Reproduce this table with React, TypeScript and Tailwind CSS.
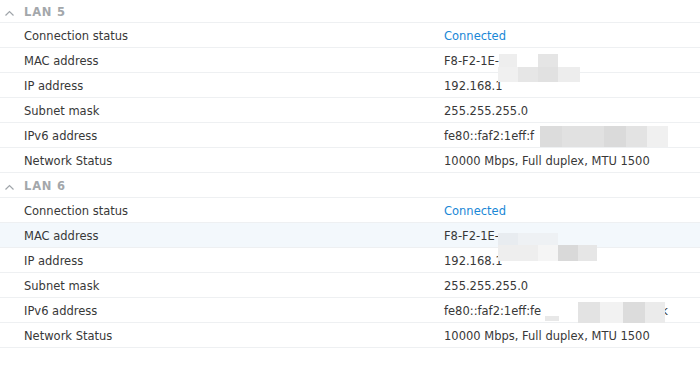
import React from "react";

type Blk = { x: number; y: number; w: number; h: number; c: string };

const rows = [
  { label: "Connection status", value: "Connected", blue: true },
  { label: "MAC address", value: "F8-F2-1E-" },
  { label: "IP address", value: "192.168.1" },
  { label: "Subnet mask", value: "255.255.255.0" },
  { label: "IPv6 address", value: "" },
  { label: "Network Status", value: "10000 Mbps, Full duplex, MTU 1500" },
];

function Chevron() {
  return (
    <svg width="11" height="8" viewBox="0 0 11 8" className="shrink-0">
      <path d="M1.5 6.5 L5.5 2.5 L9.5 6.5" fill="none" stroke="#a0a5aa" strokeWidth="1.2" />
    </svg>
  );
}

function Section({ name, hoverIdx, v6, first }: { name: string; hoverIdx?: number; v6: React.ReactNode; first?: boolean }) {
  return (
    <div>
      <div className={`flex items-center pt-[3px] border-b border-[#eef0f2] ${first ? "h-[23px]" : "h-[25px]"}`}>
        <div className="w-[24px] flex justify-start pl-[4px]">
          <Chevron />
        </div>
        <span className="text-[11.5px] font-bold text-[#a3a7ab] tracking-[0.8px]">{name}</span>
      </div>
      {rows.map((r, i) => (
        <div
          key={r.label}
          className={`flex items-center pt-[4px] h-[25px] border-b border-[#eef0f2] ${hoverIdx === i ? "bg-[#f3f8fc]" : ""}`}
        >
          <div className="w-[444px] pl-[24px] text-[#383838]">{r.label}</div>
          <div className={r.blue ? "text-[#1a87d6]" : "text-[#383838]"}>{i === 4 ? v6 : r.value}</div>
        </div>
      ))}
    </div>
  );
}

const blocks: Blk[] = [
  { x: 499, y: 54, w: 18, h: 13, c: "#eeeeee" },
  { x: 538, y: 54, w: 20, h: 13, c: "#e5e5e5" },
  { x: 498, y: 67, w: 20, h: 15, c: "#f0f0f0" },
  { x: 518, y: 67, w: 20, h: 15, c: "#e6e6e6" },
  { x: 538, y: 67, w: 20, h: 15, c: "#e1e1e1" },
  { x: 558, y: 67, w: 22, h: 15, c: "#ededed" },
  { x: 540, y: 126, w: 22, h: 21, c: "#dcdcdc" },
  { x: 562, y: 126, w: 42, h: 21, c: "#e1e1e1" },
  { x: 604, y: 126, w: 22, h: 21, c: "#dadada" },
  { x: 626, y: 126, w: 21, h: 21, c: "#e3e3e3" },
  { x: 647, y: 126, w: 21, h: 21, c: "#f0f0f0" },
  { x: 498, y: 233, w: 20, h: 12, c: "#e8ecf0" },
  { x: 518, y: 233, w: 40, h: 12, c: "#eef1f4" },
  { x: 498, y: 245, w: 40, h: 16, c: "#eeeeee" },
  { x: 538, y: 245, w: 20, h: 16, c: "#f5f5f5" },
  { x: 558, y: 245, w: 20, h: 16, c: "#d9d9d9" },
  { x: 578, y: 245, w: 19, h: 16, c: "#e6e6e6" },
  { x: 545, y: 316, w: 14, h: 5, c: "#e8e8e8" },
  { x: 578, y: 302, w: 22, h: 21, c: "#e3e3e3" },
  { x: 600, y: 302, w: 23, h: 21, c: "#f2f2f2" },
  { x: 623, y: 302, w: 22, h: 21, c: "#dcdcdc" },
  { x: 645, y: 302, w: 20, h: 21, c: "#ebebeb" },
];

export default function App() {
  return (
    <div
      className="relative w-[700px] h-[369px] bg-white overflow-hidden text-[11.5px]"
      style={{ fontFamily: '"DejaVu Sans", Verdana, sans-serif' }}
    >
      <div>
        <Section
          name="LAN 5"
          first
          v6={
            <span>
              fe80::faf2:1eff:f<span className="inline-block w-[124px]" />k
            </span>
          }
        />
        <Section
          name="LAN 6"
          hoverIdx={1}
          v6={
            <span>
              fe80::faf2:1eff:fe<span className="inline-block w-[120px]" />k
            </span>
          }
        />
      </div>
      {blocks.map((b, i) => (
        <div
          key={i}
          className="absolute"
          style={{ left: b.x, top: b.y, width: b.w, height: b.h, background: b.c }}
        />
      ))}
    </div>
  );
}
